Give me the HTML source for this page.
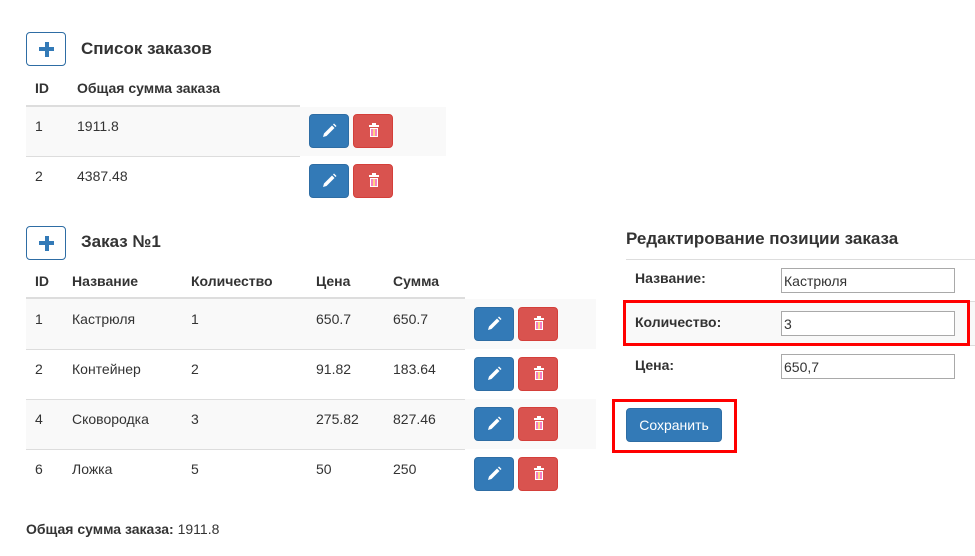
<!DOCTYPE html>
<html><head><meta charset="utf-8"><style>
*{box-sizing:border-box}
body{margin:0;width:975px;height:556px;background:#fff;font-family:"Liberation Sans",sans-serif;font-size:14px;color:#333;position:relative;overflow:hidden}
.a{position:absolute}
.plus{border:1px solid #2e6da4;border-radius:4px;width:40px;height:34px;background:#fff}
.plus:before{content:"";position:absolute;left:12px;top:14px;width:15px;height:4px;background:#337ab7}
.plus:after{content:"";position:absolute;left:17.5px;top:8.5px;width:4px;height:15px;background:#337ab7}
h3{margin:0;font-size:17px;font-weight:bold;position:absolute}
b{font-weight:bold}
.bb{width:40px;height:34px;border-radius:4px;background:#337ab7;border:1px solid #2e6da4}
.br{width:40px;height:34px;border-radius:4px;background:#d9534f;border:1px solid #d43f3a}
.inp{border:1px solid #a9a9a9;background:#fff;height:25px;width:174px;padding:4px 2px;font-size:14px}
</style></head><body>
<svg width="0" height="0" style="position:absolute"><defs>
<g id="pen"><path d="M4 16 L5 12.5 L13 4.5 L15.5 7 L7.5 15 Z" fill="#fff"/><path d="M14 3.5 L15 2.5 L17.5 5 L16.5 6 Z" fill="#fff"/></g>
<g id="trash"><rect x="5" y="4" width="10" height="2" fill="#fff"/><rect x="8" y="2" width="4" height="2" fill="#fff"/><rect x="6" y="7" width="8" height="9" fill="#fff"/><rect x="7.5" y="8" width="1" height="7" fill="#e08"/><rect x="9.5" y="8" width="1" height="7" fill="#fa0"/><rect x="11.5" y="8" width="1" height="7" fill="#e08"/></g>
</defs></svg>

<div class="a plus" style="left:26px;top:32px"></div>
<h3 style="left:81px;top:39px">Список заказов</h3>
<b class="a" style="left:35px;top:80px">ID</b>
<b class="a" style="left:77px;top:80px">Общая сумма заказа</b>
<div class="a" style="left:26px;top:105px;width:274px;height:2px;background:#ddd"></div>
<div class="a" style="left:26px;top:107px;width:420px;height:49px;background:#f9f9f9"></div>
<div class="a" style="left:26px;top:156px;width:274px;height:1px;background:#ddd"></div>
<div class="a" style="left:35px;top:118px">1</div><div class="a" style="left:77px;top:118px">1911.8</div>
<div class="a" style="left:35px;top:168px">2</div><div class="a" style="left:77px;top:168px">4387.48</div>

<h3 style="left:81px;top:232px">Заказ №1</h3>
<div class="a plus" style="left:26px;top:226px"></div>
<b class="a" style="left:35px;top:273px">ID</b>
<b class="a" style="left:72px;top:273px">Название</b>
<b class="a" style="left:191px;top:273px">Количество</b>
<b class="a" style="left:316px;top:273px">Цена</b>
<b class="a" style="left:393px;top:273px">Сумма</b>
<div class="a" style="left:26px;top:297px;width:439px;height:2px;background:#ddd"></div>
<div class="a" style="left:26px;top:299px;width:570px;height:50px;background:#f9f9f9"></div>
<div class="a" style="left:26px;top:399px;width:570px;height:50px;background:#f9f9f9"></div>
<div class="a" style="left:26px;top:349px;width:439px;height:1px;background:#ddd"></div>
<div class="a" style="left:26px;top:399px;width:439px;height:1px;background:#ddd"></div>
<div class="a" style="left:26px;top:449px;width:439px;height:1px;background:#ddd"></div>

<div class="a" style="left:35px;top:311px">1</div><div class="a" style="left:72px;top:311px">Кастрюля</div><div class="a" style="left:191px;top:311px">1</div><div class="a" style="left:316px;top:311px">650.7</div><div class="a" style="left:393px;top:311px">650.7</div>
<div class="a" style="left:35px;top:361px">2</div><div class="a" style="left:72px;top:361px">Контейнер</div><div class="a" style="left:191px;top:361px">2</div><div class="a" style="left:316px;top:361px">91.82</div><div class="a" style="left:393px;top:361px">183.64</div>
<div class="a" style="left:35px;top:411px">4</div><div class="a" style="left:72px;top:411px">Сковородка</div><div class="a" style="left:191px;top:411px">3</div><div class="a" style="left:316px;top:411px">275.82</div><div class="a" style="left:393px;top:411px">827.46</div>
<div class="a" style="left:35px;top:461px">6</div><div class="a" style="left:72px;top:461px">Ложка</div><div class="a" style="left:191px;top:461px">5</div><div class="a" style="left:316px;top:461px">50</div><div class="a" style="left:393px;top:461px">250</div>

<div id="btns"></div>
<script>
var h='';
[[309,114],[309,164],[474,307],[474,357],[474,407],[474,457]].forEach(function(p){
h+='<div class="a bb" style="left:'+p[0]+'px;top:'+p[1]+'px"><svg class="a" style="left:9px;top:6px" width="20" height="20"><use href="#pen"/></svg></div>';
h+='<div class="a br" style="left:'+(p[0]+44)+'px;top:'+p[1]+'px"><svg class="a" style="left:10px;top:6px" width="20" height="20"><use href="#trash"/></svg></div>';
});
document.getElementById('btns').innerHTML=h;
</script>

<div class="a" style="left:26px;top:521px"><b>Общая сумма заказа:</b> 1911.8</div>

<h3 style="left:626px;top:229px">Редактирование позиции заказа</h3>
<div class="a" style="left:626px;top:259px;width:349px;height:1px;background:#ddd"></div>
<div class="a" style="left:626px;top:301px;width:349px;height:44px;background:#f9f9f9;border-top:1px solid #ddd"></div>
<div class="a" style="left:626px;top:345px;width:349px;height:1px;background:#ddd"></div>
<b class="a" style="left:635px;top:270px">Название:</b>
<b class="a" style="left:635px;top:314px">Количество:</b>
<b class="a" style="left:635px;top:357px">Цена:</b>
<div class="a inp" style="left:781px;top:268px">Кастрюля</div>
<div class="a inp" style="left:781px;top:311px">3</div>
<div class="a inp" style="left:781px;top:354px">650,7</div>
<div class="a" style="left:623px;top:300px;width:347px;height:46px;border:3px solid #f00"></div>
<div class="a" style="left:626px;top:408px;width:96px;height:34px;background:#337ab7;border:1px solid #2e6da4;border-radius:4px;color:#fff;text-align:center;line-height:32px">Сохранить</div>
<div class="a" style="left:612px;top:399px;width:125px;height:54px;border:3px solid #f00"></div>
</body></html>
